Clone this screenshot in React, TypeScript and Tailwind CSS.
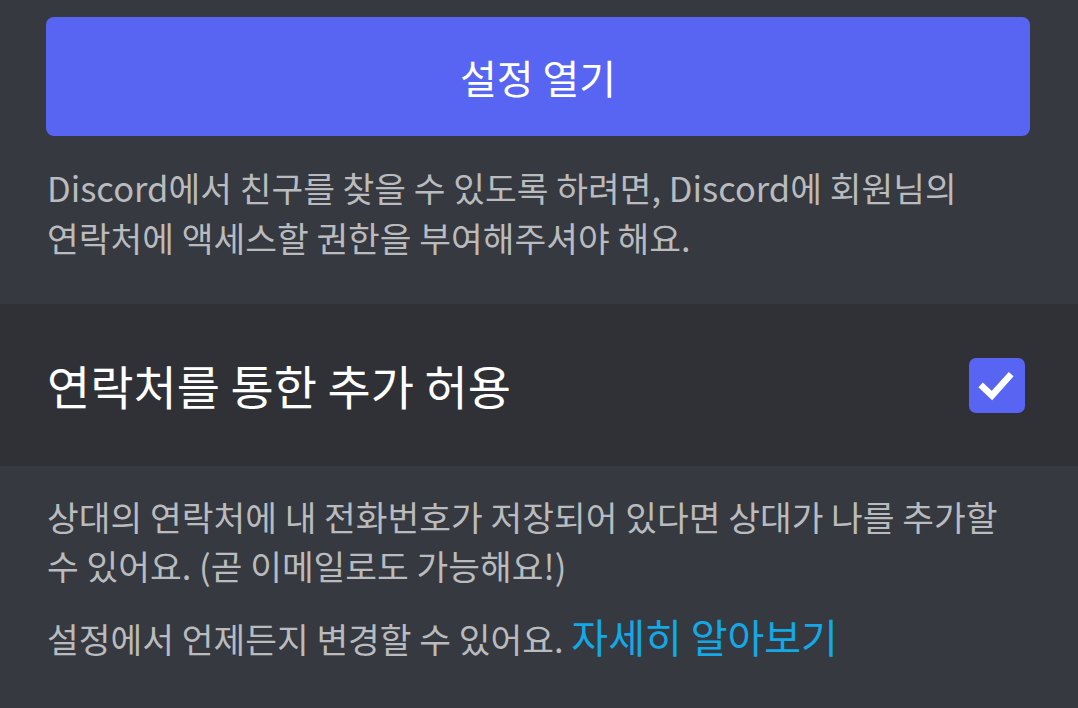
export default function App() {
  const font = { fontFamily: '"Noto Sans CJK KR", "Noto Sans", sans-serif' };
  return (
    <div className="min-h-screen w-full bg-[#36393f]" style={font}>
      <div className="pl-[46px] pr-[48px] pt-[17px]">
        <button className="flex h-[119px] w-full items-center justify-center rounded-lg bg-[#5865f2] text-[40px] font-normal text-white">
          설정 열기
        </button>
      </div>
      <p className="px-[47px] pt-[26px] pb-[42px] text-[34.5px] leading-[50px] text-[#b9bbbe]">
        Discord에서 친구를 찾을 수 있도록 하려면, Discord에 회원님의
        <br />
        연락처에 액세스할 권한을 부여해주셔야 해요.
      </p>
      <div className="flex h-[162px] items-center justify-between bg-[#2f3136] pl-[47px] pr-[53px]">
        <span className="text-[47px] font-normal text-white">연락처를 통한 추가 허용</span>
        <span className="flex h-[55px] w-[56px] items-center justify-center rounded-[7px] bg-[#5865f2]">
          <svg width="56" height="55" viewBox="0 0 56 55" fill="none" aria-hidden="true">
            <path d="M14 29 L23 37.5 L40 18.5" stroke="white" strokeWidth="6.5" strokeLinecap="square" />
          </svg>
        </span>
      </div>
      <div className="px-[47px] pt-[26px] text-[34.5px] text-[#b9bbbe]">
        <p className="leading-[49px]">
          상대의 연락처에 내 전화번호가 저장되어 있다면 상대가 나를 추가할
          <br />
          수 있어요. (곧 이메일로도 가능해요!)
        </p>
        <p className="mt-[22px] leading-[49px]">
          설정에서 언제든지 변경할 수 있어요.{" "}
          <a className="text-[40px] text-[#12a9e6]">자세히 알아보기</a>
        </p>
      </div>
    </div>
  );
}
